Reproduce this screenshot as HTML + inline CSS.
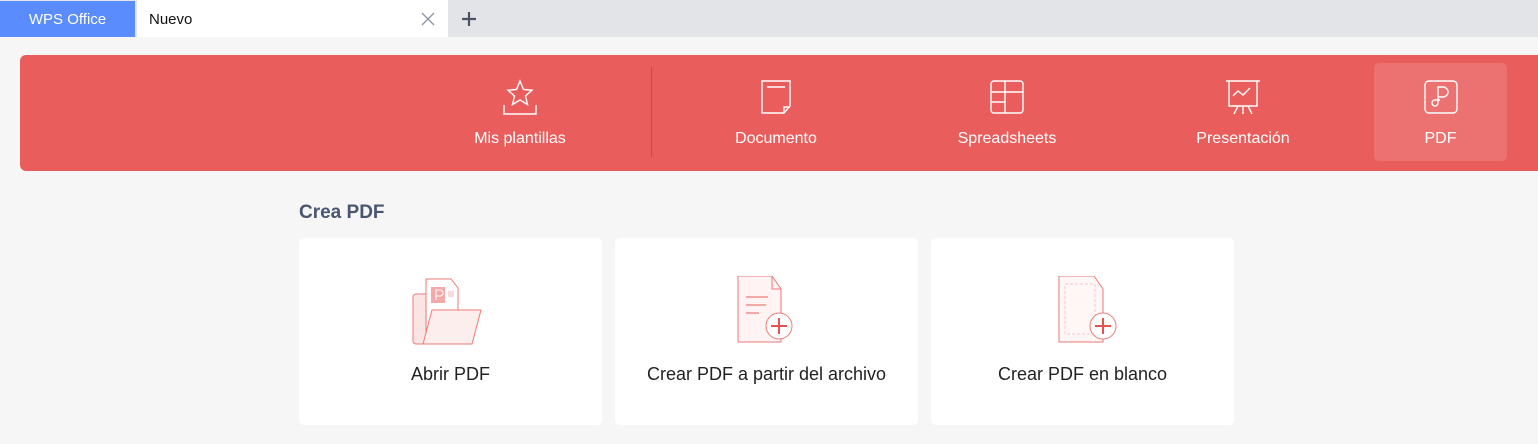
<!DOCTYPE html>
<html><head><meta charset="utf-8"><style>
*{margin:0;padding:0;box-sizing:border-box}
body{width:1538px;height:444px;overflow:hidden;background:#f6f6f6;font-family:"Liberation Sans",sans-serif;position:relative}
.tabbar{position:absolute;left:0;top:0;width:1538px;height:37px;background:#e3e4e8}
.wps{position:absolute;left:0;top:1px;width:135px;height:36px;background:#5b8cfd;color:#fff;font-size:15px;line-height:37px;text-align:center}
.nuevo{position:absolute;left:137px;top:0;width:311px;height:37px;background:#fff;font-size:15px;line-height:39px;padding-left:12px;color:#111}
.x{position:absolute;left:421px;top:12px}
.plus{position:absolute;left:460px;top:10px}
.banner{position:absolute;left:20px;top:55px;width:1530px;height:116px;background:#e95e5c;border-radius:6px}
.item{position:absolute;top:0;height:116px;color:#fff;font-size:16px;text-align:center}
.item svg{position:absolute;top:24px;left:50%;margin-left:-18px}
.item span{position:absolute;top:75px;left:0;right:0}
.div{position:absolute;left:631px;top:12px;width:1px;height:90px;background:rgba(150,40,40,.35)}
.hl{position:absolute;left:1354px;top:8px;width:133px;height:98px;background:rgba(255,255,255,.13);border-radius:5px}
h2{position:absolute;left:299px;top:202px;font-size:19px;font-weight:bold;color:#4a5570}
.card{position:absolute;top:238px;width:303px;height:187px;background:#fff;border-radius:5px;text-align:center}
.card span{position:absolute;top:126px;left:0;right:0;font-size:18px;color:#222}
.card svg{position:absolute;top:38px;left:50%;margin-left:-40px}
</style></head><body>
<div class="tabbar">
<div class="wps">WPS Office</div>
<div class="nuevo">Nuevo</div>
<svg class="x" width="14" height="14"><path d="M1 1L13 13M13 1L1 13" stroke="#8a94a6" stroke-width="1.3"/></svg>
<svg class="plus" width="18" height="18"><path d="M9 2V16M2 9H16" stroke="#4a5263" stroke-width="2.2"/></svg>
</div>
<div class="banner">
<div class="div"></div>
<div class="hl"></div>
<div class="item" style="left:420px;width:160px"><svg width="36" height="36" fill="none" stroke="#fff" stroke-width="1.4"><path d="M18 2L21.5 10.5L30 11.2L23.5 17L25.5 25.5L18 21L10.5 25.5L12.5 17L6 11.2L14.5 10.5Z"/><path d="M2 26V35H34V26"/></svg><span>Mis plantillas</span></div>
<div class="item" style="left:676px;width:160px"><svg width="36" height="36" fill="none" stroke="#fff" stroke-width="1.4"><path d="M4 2H32V27L26 34H4Z"/><path d="M26 34V28H32"/><path d="M9 8H27"/></svg><span>Documento</span></div>
<div class="item" style="left:907px;width:160px"><svg width="36" height="36" fill="none" stroke="#fff" stroke-width="1.4"><rect x="2" y="2" width="32" height="32" rx="3"/><path d="M2 13H34M2 23H16M16 2V34"/></svg><span>Spreadsheets</span></div>
<div class="item" style="left:1143px;width:160px"><svg width="36" height="36" fill="none" stroke="#fff" stroke-width="1.4"><path d="M1 2H35M4 2V27H32V2M13 27L9 35M23 27L27 35M18 27V35M8 17L13 12L18 16L25 9"/></svg><span>Presentación</span></div>
<div class="item" style="left:1354px;width:133px"><svg width="36" height="36" fill="none" stroke="#fff" stroke-width="1.4"><rect x="2" y="2" width="32" height="32" rx="4"/><path d="M15 24V8H20A5 5 0 0 1 20 18H15M15 24A3 3 0 1 1 12 21H17"/></svg><span>PDF</span></div>
</div>
<h2>Crea PDF</h2>
<div class="card" style="left:299px"><svg width="80" height="70" stroke="#ee7a78" stroke-width="1"><rect x="2" y="18" width="40" height="50" rx="3" fill="#fbe4e4"/><path d="M15 3H40L47 12V60H15Z" fill="#fff"/><rect x="20" y="11" width="14" height="16" fill="#f4a9a8" stroke="none"/><path d="M25 24V14H29A3 3 0 0 1 29 20H25" stroke="#fff" fill="none"/><rect x="37" y="15" width="6" height="6" fill="#fadada" stroke="none"/><path d="M12 68L21 34H70L61 68Z" fill="#fdeeee"/></svg><span>Abrir PDF</span></div>
<div class="card" style="left:615px"><svg width="80" height="70" stroke="#ee7a78" stroke-width="1" style="margin-left:-50px"><path d="M21 0H55L64 13V66H21Z" fill="#fff3f3"/><path d="M55 0V13H64" fill="none"/><path d="M29 21H51M29 29H49M29 37H42" stroke="#f08f8d" stroke-width="1.5"/><circle cx="62" cy="50" r="13" fill="#fff"/><path d="M62 42V58M54 50H70" stroke="#e5524f" stroke-width="2"/></svg><span>Crear PDF a partir del archivo</span></div>
<div class="card" style="left:931px"><svg width="80" height="70" stroke="#ee7a78" stroke-width="1" style="margin-left:-44px"><path d="M20 0H55L64 13V66H20Z" fill="#fff6f6"/><rect x="26" y="8" width="30" height="50" fill="none" stroke="#f8c6c5" stroke-dasharray="3 2"/><circle cx="64" cy="50" r="13" fill="#fff"/><path d="M64 42V58M56 50H72" stroke="#e5524f" stroke-width="2"/></svg><span>Crear PDF en blanco</span></div>
</body></html>
